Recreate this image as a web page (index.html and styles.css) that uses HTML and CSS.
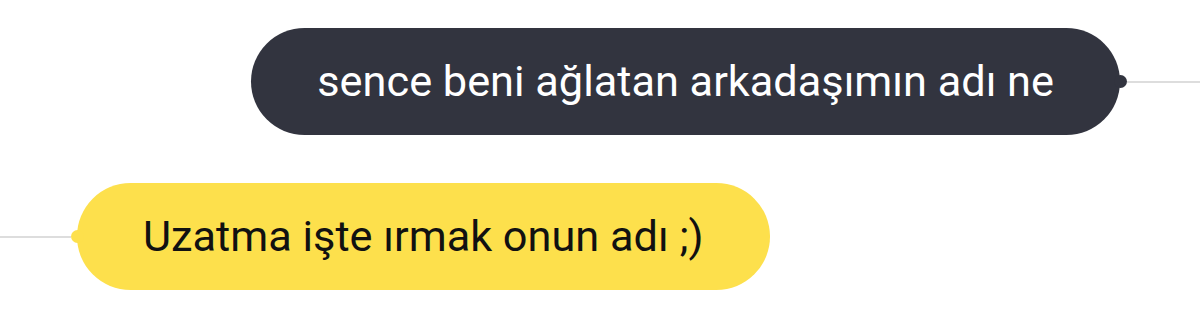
FILE: index.html
```html
<!DOCTYPE html>
<html lang="tr">
<head>
<meta charset="utf-8">
<link rel="stylesheet" href="styles.css">
</head>
<body>
<div class="chat">
  <div class="row row-right">
    <div class="bubble bubble-dark">sence beni ağlatan arkadaşımın adı ne</div>
    <span class="dot dot-dark dot-after"></span>
    <span class="line line-right"></span>
  </div>
  <div class="row row-left">
    <span class="line line-left"></span>
    <span class="dot dot-yellow dot-before"></span>
    <div class="bubble bubble-yellow">Uzatma işte ırmak onun adı ;)</div>
  </div>
</div>
</body>
</html>
```
FILE: styles.css
```css
html, body {
  margin: 0;
  padding: 0;
  background: #ffffff;
}
.chat {
  width: 1200px;
  height: 316px;
  padding-top: 28px;
  box-sizing: border-box;
  display: flex;
  flex-direction: column;
  gap: 48px;
  font-family: Roboto, "Noto Sans", sans-serif;
}
.row {
  display: flex;
  align-items: center;
}
.row-right {
  justify-content: flex-end;
}
.row-left {
  justify-content: flex-start;
}
.bubble {
  height: 107px;
  box-sizing: border-box;
  border-radius: 54px;
  display: flex;
  align-items: center;
  padding: 0 66px;
  font-size: 43.3px;
  white-space: nowrap;
  position: relative;
  z-index: 1;
}
.bubble-dark {
  background: #32343f;
  color: #ffffff;
}
.bubble-yellow {
  background: #fde04c;
  color: #111111;
}
.dot {
  width: 13px;
  height: 13px;
  border-radius: 50%;
  flex: none;
  position: relative;
  z-index: 2;
}
.dot-dark {
  background: #32343f;
}
.dot-yellow {
  background: #fde04c;
}
.dot-after {
  margin-left: -6px;
}
.dot-before {
  margin-right: -7px;
}
.line {
  height: 2px;
  background: #dddddd;
  flex: none;
}
.line-right {
  width: 73px;
}
.line-left {
  width: 71px;
}
```
